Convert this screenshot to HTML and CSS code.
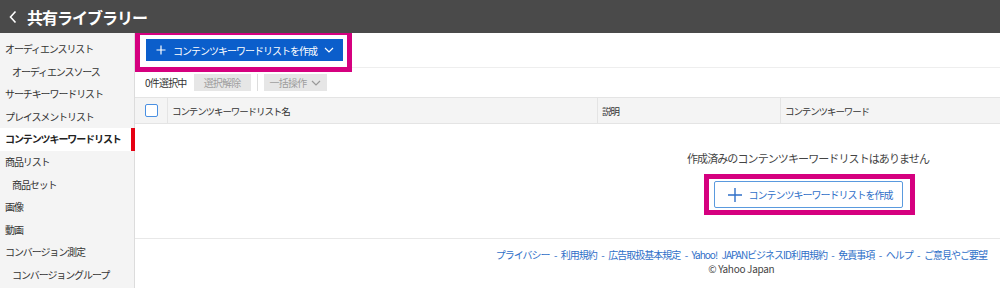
FILE: index.html
```html
<!DOCTYPE html>
<html lang="ja">
<head>
  <meta charset="UTF-8">
  <meta name="viewport" content="width=device-width, initial-scale=1.0">
  <title>共有ライブラリー — コンテンツキーワードリスト</title>
  <link rel="stylesheet" href="styles.css">
</head>
<body>
  <header class="topbar">
    <svg class="back" width="10" height="14" viewBox="0 0 10 14"><polyline points="7.5,1.5 2.5,7 7.5,12.5" fill="none" stroke="#fff" stroke-width="1.6"/></svg>
    <h1>共有ライブラリー</h1>
  </header>

  <div class="layout">
    <nav class="sidenav">
      <a class="nav-item">オーディエンスリスト</a>
      <a class="nav-item sub">オーディエンスソース</a>
      <a class="nav-item">サーチキーワードリスト</a>
      <a class="nav-item">プレイスメントリスト</a>
      <a class="nav-item active">コンテンツキーワードリスト</a>
      <a class="nav-item">商品リスト</a>
      <a class="nav-item sub">商品セット</a>
      <a class="nav-item">画像</a>
      <a class="nav-item">動画</a>
      <a class="nav-item">コンバージョン測定</a>
      <a class="nav-item sub">コンバージョングループ</a>
    </nav>

    <main class="content">
      <div class="actionbar">
        <button class="btn-primary mark mark-top">
          <svg width="10" height="10" viewBox="0 0 10 10"><path d="M5 0.5V9.5M0.5 5H9.5" stroke="#fff" stroke-width="1.2"/></svg>
          <span>コンテンツキーワードリストを作成</span>
          <svg width="10" height="6" viewBox="0 0 10 6"><polyline points="1,1 5,5 9,1" fill="none" stroke="#fff" stroke-width="1.2"/></svg>
        </button>
      </div>

      <div class="toolbar">
        <span class="count">0件選択中</span>
        <button class="btn-gray">選択解除</button>
        <span class="divider"></span>
        <button class="btn-gray">一括操作
          <svg width="10" height="6" viewBox="0 0 10 6"><polyline points="1,1 5,5 9,1" fill="none" stroke="#999" stroke-width="1.2"/></svg>
        </button>
      </div>

      <div class="table-head">
        <div class="cell cell-check"><span class="checkbox"></span></div>
        <div class="cell cell-name">コンテンツキーワードリスト名</div>
        <div class="cell cell-desc">説明</div>
        <div class="cell cell-kw">コンテンツキーワード</div>
      </div>

      <div class="empty">
        <p>作成済みのコンテンツキーワードリストはありません</p>
        <button class="btn-outline mark mark-bottom">
          <svg width="16" height="16" viewBox="0 0 16 16"><path d="M8 1V15M1 8H15" stroke="#2f6fc8" stroke-width="1.4"/></svg>
          <span>コンテンツキーワードリストを作成</span>
        </button>
      </div>

      <footer class="footer">
        <div class="footer-inner">
          <div class="links">
            <a>プライバシー</a> - <a>利用規約</a> - <a>広告取扱基本規定</a> - <a>Yahoo! JAPANビジネスID利用規約</a> - <a>免責事項</a> - <a>ヘルプ</a> - <a>ご意見やご要望</a>
          </div>
          <div class="copy">© Yahoo Japan</div>
        </div>
      </footer>
    </main>
  </div>
</body>
</html>
```

FILE: styles.css
```css
* { box-sizing: border-box; }
body {
  margin: 0;
  width: 1000px;
  height: 288px;
  overflow: hidden;
  font-family: 'Noto Sans CJK JP', 'Noto Sans', sans-serif;
  font-size: 10px;
  color: #333;
  background: #fff;
}
button {
  font-family: inherit;
  border: none;
  cursor: pointer;
}

/* header */
.topbar {
  height: 33px;
  background: #4a4a4a;
  display: flex;
  align-items: center;
  padding-left: 8px;
  gap: 9px;
}
.topbar h1 {
  margin: 0;
  color: #fff;
  font-size: 16px;
  font-weight: 700;
  letter-spacing: -1px;
}

.layout {
  display: flex;
  height: 255px;
}

/* side navigation */
.sidenav {
  width: 135px;
  flex: none;
  background: #f4f4f4;
  border-right: 1px solid #dcdcdc;
  padding-top: 5px;
  display: flex;
  flex-direction: column;
}
.nav-item {
  height: 22.6px;
  line-height: 22.6px;
  padding-left: 5px;
  letter-spacing: -1.1px;
  color: #333;
  white-space: nowrap;
}
.nav-item.sub { padding-left: 12px; }
.nav-item.active {
  background: #fff;
  font-weight: 700;
  color: #222;
  margin-right: -1px;
  border-right: 4px solid #e60012;
  width: 135px;
}

/* main */
.content {
  flex: 1;
  min-width: 0;
  overflow: hidden;
  display: flex;
  flex-direction: column;
}
.actionbar {
  height: 35px;
  padding: 6px 0 0 11px;
  border-bottom: 1px solid #eee;
}
.btn-primary {
  height: 22px;
  width: 197px;
  background: #0b5ecb;
  color: #fff;
  font-size: 10px;
  letter-spacing: -1px;
  display: flex;
  align-items: center;
  gap: 7px;
  padding: 0 0 0 10px;
}
.mark { position: relative; }
.mark::after {
  content: '';
  position: absolute;
  border: 5px solid #d5007f;
  pointer-events: none;
}
.mark-top::after { top: -9px; left: -11px; right: -9px; bottom: -11px; }
.mark-bottom::after { top: -8px; left: -11px; right: -13px; bottom: -8px; }

.toolbar {
  height: 29px;
  display: flex;
  align-items: center;
  padding-left: 10px;
  gap: 6px;
}
.count { letter-spacing: -0.8px; margin-right: 1px; }
.btn-gray {
  height: 17px;
  background: #e6e6e6;
  color: #9d9d9d;
  font-size: 10px;
  letter-spacing: -0.8px;
  padding: 0 6px;
  display: flex;
  align-items: center;
  gap: 5px;
}
.btn-gray:first-of-type { width: 57px; justify-content: center; }
.divider {
  width: 1px;
  height: 17px;
  background: #ddd;
}

/* table header */
.table-head {
  display: flex;
  height: 27px;
  width: 1346px;
  background: #f4f4f4;
  border-top: 1px solid #e4e4e4;
  border-bottom: 1px solid #e4e4e4;
}
.cell {
  display: flex;
  align-items: center;
  padding-left: 4px;
  font-size: 9.5px;
  letter-spacing: -1.1px;
  border-right: 1px solid #e4e4e4;
}
.cell-check { width: 33px; padding-left: 10px; }
.cell-name { width: 430px; }
.cell-desc { width: 183px; }
.cell-kw { flex: 1; border-right: none; }
.checkbox {
  width: 13px;
  height: 13px;
  border: 1.5px solid #4a90e2;
  border-radius: 2px;
  background: #fff;
}

/* empty state */
.empty {
  width: 1346px;
  height: 115px;
  display: flex;
  flex-direction: column;
  align-items: center;
  padding-top: 27px;
  border-bottom: 1px solid #e8e8e8;
}
.empty p {
  margin: 0 0 16px;
  font-size: 11px;
  line-height: 14px;
  letter-spacing: -0.9px;
  color: #444;
}
.btn-outline {
  width: 189px;
  height: 27px;
  background: #fff;
  border: 1px solid #5a9ade;
  border-radius: 2px;
  color: #2f6fc8;
  font-size: 10px;
  letter-spacing: -1px;
  display: flex;
  align-items: center;
  gap: 6px;
  padding: 0 0 0 12px;
}

/* footer */
.footer {
  display: flex;
  justify-content: flex-end;
  padding: 8px 13px 0 0;
}
.footer-inner { text-align: center; }
.links {
  color: #2f6fc8;
  font-size: 10px;
  line-height: 15px;
  letter-spacing: -1px;
  word-spacing: 3.2px;
}
.links a { color: #2f6fc8; }
.copy {
  font-size: 10px;
  line-height: 13px;
  letter-spacing: -0.3px;
  color: #444;
}
```
